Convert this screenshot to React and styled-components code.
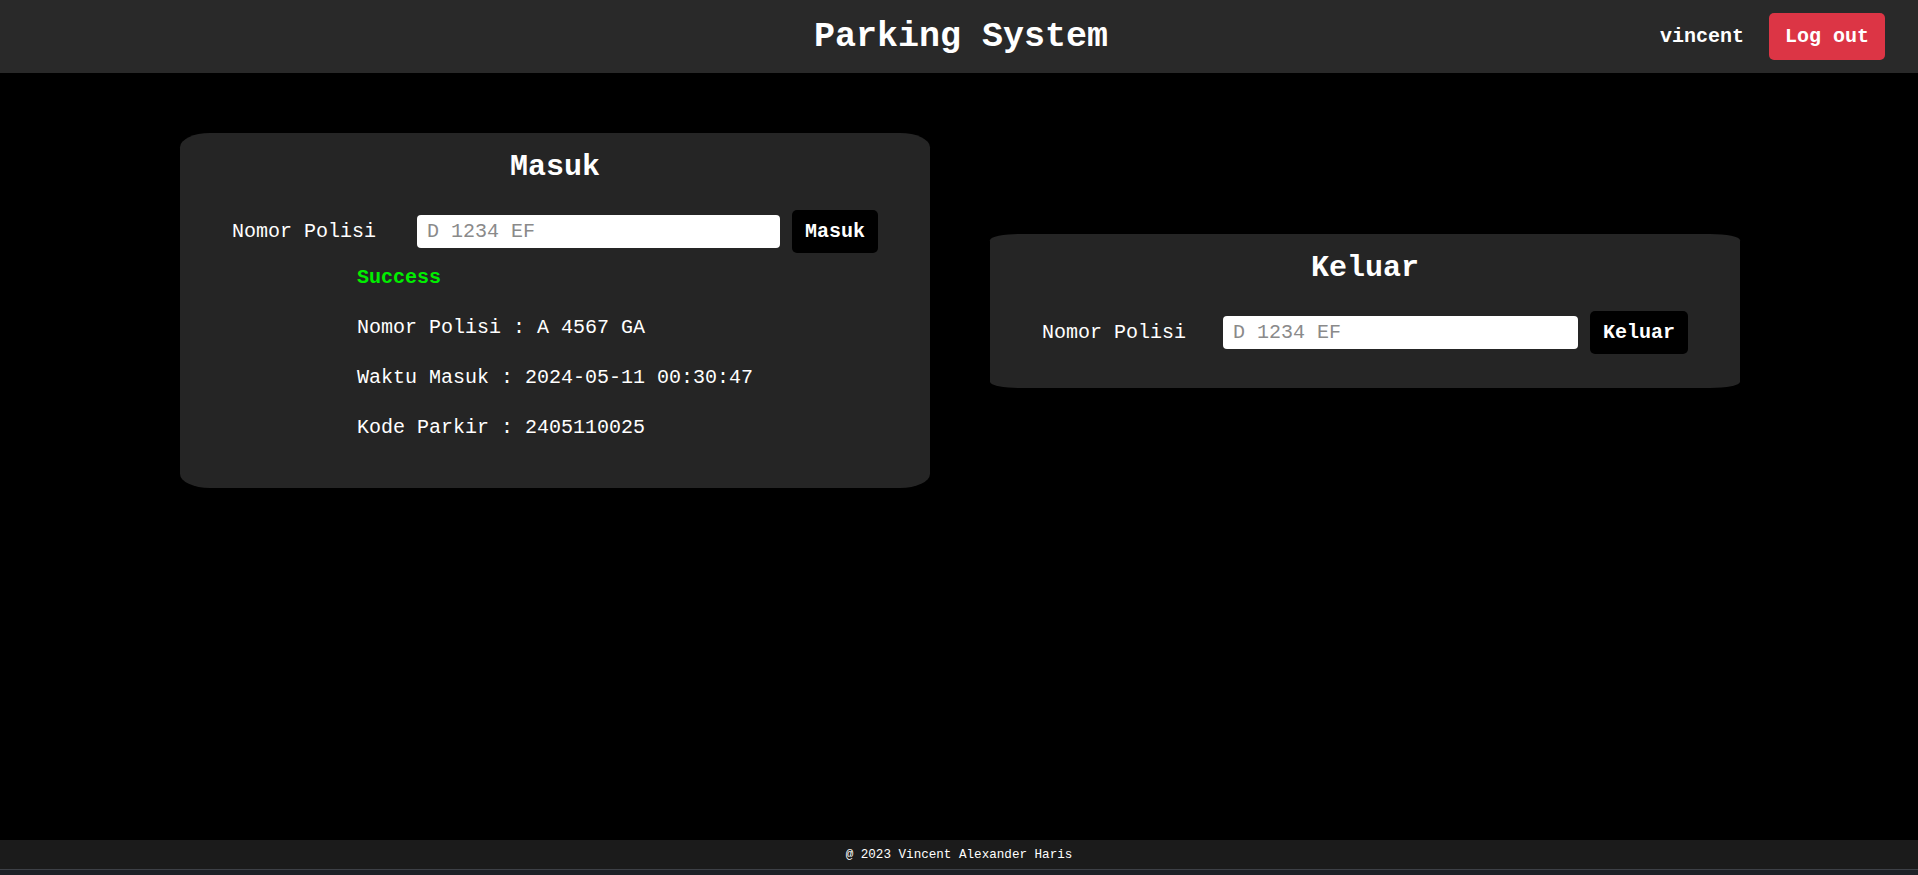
import React from "react";
import styled, { createGlobalStyle } from "styled-components";

const GlobalStyle = createGlobalStyle`
  html, body {
    margin: 0;
    padding: 0;
    background: #000;
    font-family: "Liberation Mono", "Courier New", monospace;
  }
  * { box-sizing: border-box; }
`;

const Page = styled.div`
  height: 875px;
  display: flex;
  flex-direction: column;
  background: #000;
  color: #fff;
`;

const Header = styled.header`
  height: 73px;
  flex: 0 0 73px;
  background: #292929;
  display: grid;
  grid-template-columns: 1fr auto 1fr;
  align-items: center;
`;

const Title = styled.h1`
  grid-column: 2;
  margin: 0 0 0 4px;
  font-size: 35px;
  font-weight: bold;
  color: #fff;
`;

const UserArea = styled.div`
  grid-column: 3;
  display: flex;
  align-items: center;
  justify-content: flex-end;
  gap: 25px;
  padding-right: 33px;
`;

const UserName = styled.span`
  font-size: 20px;
  font-weight: bold;
  color: #fff;
`;

const LogoutButton = styled.button`
  font-family: inherit;
  font-size: 20px;
  font-weight: bold;
  line-height: 23px;
  color: #fff;
  background: #dc3545;
  border: none;
  border-radius: 5px;
  padding: 12px 16px;
  cursor: pointer;
`;

const Main = styled.main`
  flex: 1;
  display: flex;
  justify-content: center;
  align-items: flex-start;
  padding: 60px 0 0 2px;
`;

const CardRow = styled.div`
  display: flex;
  align-items: center;
  gap: 60px;
`;

const Card = styled.section`
  width: 750px;
  background: #252525;
  border-radius: 4%;
  padding: 17px 0 ${(p) => p.$padBottom}px;
  display: flex;
  flex-direction: column;
  align-items: center;
`;

const CardTitle = styled.h2`
  margin: 0 0 26px;
  font-size: 30px;
  line-height: 34px;
  font-weight: bold;
  color: #fff;
`;

const FormRow = styled.div`
  width: 646px;
  display: grid;
  grid-template-columns: ${(p) => p.$labelWidth}px 1fr auto;
  align-items: center;
`;

const Label = styled.label`
  font-size: 20px;
  line-height: 23px;
  color: #fff;
  white-space: nowrap;
`;

const Input = styled.input`
  font-family: "Liberation Mono", "Courier New", monospace;
  font-size: 20px;
  line-height: 23px;
  height: 33px;
  padding: 4px 10px;
  border: none;
  border-radius: 4px;
  background: #fff;
  color: #000;
  margin-right: 12px;
  outline: none;
  min-width: 0;
  &::placeholder {
    color: #8a8a8a;
  }
`;

const ActionButton = styled.button`
  font-family: inherit;
  font-size: 20px;
  line-height: 23px;
  font-weight: bold;
  color: #fff;
  background: #000;
  border: none;
  border-radius: 5px;
  padding: 10px 13px;
  cursor: pointer;
`;

const Info = styled.div`
  margin-top: 13px;
  display: flex;
  flex-direction: column;
  gap: 27px;
  padding-bottom: 15px;
  text-align: left;
`;

const InfoLine = styled.p`
  margin: 0;
  font-size: 20px;
  line-height: 23px;
  color: ${(p) => (p.$success ? "#00ee00" : "#fff")};
  font-weight: ${(p) => (p.$success ? "bold" : "normal")};
  white-space: pre;
`;

const Footer = styled.footer`
  flex: 0 0 29px;
  height: 29px;
  background: #1b1b1b;
  display: flex;
  align-items: center;
  justify-content: center;
  font-size: 12.6px;
  color: #fff;
`;

const BottomStrip = styled.div`
  flex: 0 0 6px;
  background: #1d2127;
  border-top: 1px solid #3d4046;
`;

function ParkingCard({ title, buttonLabel, labelWidth, padBottom, children }) {
  return (
    <Card $padBottom={padBottom}>
      <CardTitle>{title}</CardTitle>
      <FormRow $labelWidth={labelWidth}>
        <Label>Nomor Polisi</Label>
        <Input placeholder="D 1234 EF" />
        <ActionButton>{buttonLabel}</ActionButton>
      </FormRow>
      {children}
    </Card>
  );
}

export default function App() {
  return (
    <>
      <GlobalStyle />
      <Page>
        <Header>
          <Title>Parking System</Title>
          <UserArea>
            <UserName>vincent</UserName>
            <LogoutButton>Log out</LogoutButton>
          </UserArea>
        </Header>
        <Main>
          <CardRow>
            <ParkingCard title="Masuk" buttonLabel="Masuk" labelWidth={185} padBottom={34}>
              <Info>
                <InfoLine $success>Success</InfoLine>
                <InfoLine>Nomor Polisi : A 4567 GA</InfoLine>
                <InfoLine>Waktu Masuk : 2024-05-11 00:30:47</InfoLine>
                <InfoLine>Kode Parkir : 2405110025</InfoLine>
              </Info>
            </ParkingCard>
            <ParkingCard title="Keluar" buttonLabel="Keluar" labelWidth={181} padBottom={34} />
          </CardRow>
        </Main>
        <Footer>@ 2023 Vincent Alexander Haris</Footer>
        <BottomStrip />
      </Page>
    </>
  );
}
